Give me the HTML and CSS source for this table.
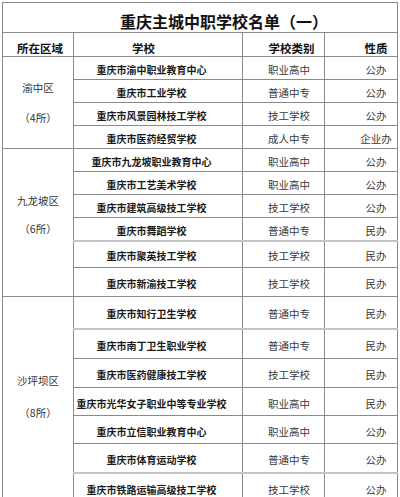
FILE: index.html
```html
<!DOCTYPE html>
<html lang="zh-CN">
<head>
<meta charset="utf-8">
<title>重庆主城中职学校名单（一）</title>
<link rel="stylesheet" href="styles.css">
</head>
<body>
<table class="list">
  <colgroup>
    <col class="c-region">
    <col class="c-name">
    <col class="c-type">
    <col class="c-kind">
  </colgroup>
  <tr class="r-title"><td colspan="4" class="title">重庆主城中职学校名单（一）</td></tr>
  <tr class="r-head">
    <th class="h-region">所在区域</th>
    <th class="h-name">学校</th>
    <th class="h-type">学校类别</th>
    <th class="h-kind">性质</th>
  </tr>

  <tr class="h23">
    <td rowspan="4" class="region"><div class="rg g1"><span>渝中区</span><span>（4所）</span></div></td>
    <td class="name">重庆市渝中职业教育中心</td><td class="type">职业高中</td><td class="kind">公办</td>
  </tr>
  <tr class="h23"><td class="name">重庆市工业学校</td><td class="type">普通中专</td><td class="kind">公办</td></tr>
  <tr class="h23"><td class="name">重庆市风景园林技工学校</td><td class="type">技工学校</td><td class="kind">公办</td></tr>
  <tr class="h23"><td class="name">重庆市医药经贸学校</td><td class="type">成人中专</td><td class="kind">企业办</td></tr>

  <tr class="h23">
    <td rowspan="6" class="region"><div class="rg g2"><span>九龙坡区</span><span>（6所）</span></div></td>
    <td class="name">重庆市九龙坡职业教育中心</td><td class="type">职业高中</td><td class="kind">公办</td>
  </tr>
  <tr class="h23"><td class="name">重庆市工艺美术学校</td><td class="type">职业高中</td><td class="kind">公办</td></tr>
  <tr class="h23"><td class="name">重庆市建筑高级技工学校</td><td class="type">技工学校</td><td class="kind">公办</td></tr>
  <tr class="h23"><td class="name">重庆市舞蹈学校</td><td class="type">普通中专</td><td class="kind">民办</td></tr>
  <tr class="h27 soft"><td class="name">重庆市聚英技工学校</td><td class="type">技工学校</td><td class="kind">民办</td></tr>
  <tr class="h29"><td class="name">重庆市新渝技工学校</td><td class="type">技工学校</td><td class="kind">民办</td></tr>

  <tr class="h32">
    <td rowspan="8" class="region"><div class="rg g3"><span>沙坪坝区</span><span>（8所）</span></div></td>
    <td class="name">重庆市知行卫生学校</td><td class="type">普通中专</td><td class="kind">民办</td>
  </tr>
  <tr class="h30 soft"><td class="name">重庆市南丁卫生职业学校</td><td class="type">普通中专</td><td class="kind">民办</td></tr>
  <tr class="h29"><td class="name">重庆市医药健康技工学校</td><td class="type">技工学校</td><td class="kind">民办</td></tr>
  <tr class="h28"><td class="name">重庆市光华女子职业中等专业学校</td><td class="type">职业高中</td><td class="kind">民办</td></tr>
  <tr class="h28"><td class="name">重庆市立信职业教育中心</td><td class="type">职业高中</td><td class="kind">公办</td></tr>
  <tr class="h29"><td class="name">重庆市体育运动学校</td><td class="type">普通中专</td><td class="kind">公办</td></tr>
  <tr class="h30 soft"><td class="name">重庆市铁路运输高级技工学校</td><td class="type">技工学校</td><td class="kind">公办</td></tr>
</table>
</body>
</html>
```

FILE: styles.css
```css
html {
  overflow: hidden;
  background: #ffffff;
}

body {
  margin: 0;
  padding: 2px 0 0 2px;
  background: #ffffff;
  font-family: "Noto Sans CJK SC", "Noto Sans", sans-serif;
  color: #222222;
}

.list {
  border-collapse: collapse;
  table-layout: fixed;
  width: 395px;
}

.list td,
.list th {
  border: 1px solid #8a8a8a;
  padding: 0;
  text-align: center;
  vertical-align: middle;
  white-space: nowrap;
  overflow: hidden;
}

.c-region { width: 71px; }
.c-name { width: 169px; }
.c-type { width: 82px; }
.c-kind { width: 73px; }

/* title */
.r-title { height: 30px; }
.list .title {
  font-size: 16px;
  font-weight: 700;
  line-height: 18px;
  padding: 6px 0 0 48px;
  color: #111111;
}

/* header */
.r-head { height: 24px; }
.list .r-head th {
  font-size: 11.5px;
  font-weight: 700;
  line-height: 14px;
  padding-top: 7px;
  color: #111111;
}
.list .r-head .h-region { padding-left: 4px; }
.list .r-head .h-name { padding-right: 29px; }
.list .r-head .h-type { padding-left: 16px; }
.list .r-head .h-kind { padding-left: 30px; }

/* rows */
.h23 { height: 23px; }
.h27 { height: 27px; }
.h28 { height: 28px; }
.h29 { height: 29px; }
.h30 { height: 30px; }
.h32 { height: 32px; }

.list .soft td {
  border-top: 2px solid #c4c4c4;
}
.list .soft td.region {
  border-top: 1px solid #8a8a8a;
}

.list .name {
  font-size: 10px;
  font-weight: 700;
  line-height: 13px;
  padding: 3px 13px 0 0;
  color: #1a1a1a;
}

.list .type {
  font-size: 10.5px;
  line-height: 13px;
  padding: 3px 0 0 11px;
  color: #3a3a3a;
}

.list .kind {
  font-size: 10.5px;
  line-height: 13px;
  padding: 3px 0 0 30px;
  color: #3a3a3a;
}

/* region cells */
.list .region {
  font-size: 10.5px;
  color: #333333;
}

.rg {
  display: flex;
  flex-direction: column;
  align-items: center;
  line-height: 14px;
}

.g1 { gap: 16px; }
.g2 { gap: 14px; padding-bottom: 16px; }
.g3 { gap: 18px; padding-bottom: 6px; }
```
